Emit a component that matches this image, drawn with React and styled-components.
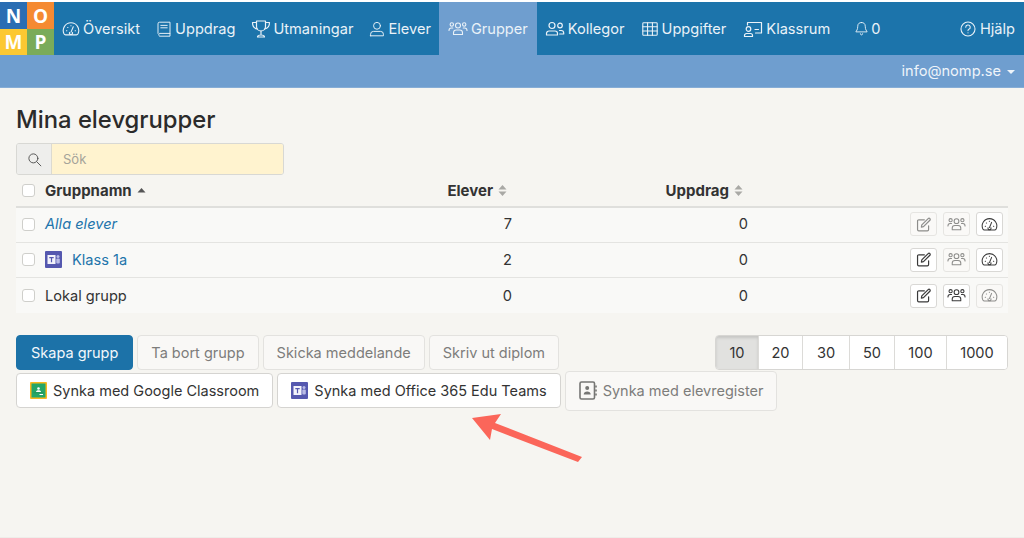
import React from "react";
import styled, { createGlobalStyle } from "styled-components";

const Global = createGlobalStyle`
  html, body { margin: 0; padding: 0; background: #f6f5f1; }
  body { font-family: Inter, "Liberation Sans", sans-serif; color: #333; }
  #root { min-height: 538px; }
  * { box-sizing: border-box; }
`;

const Page = styled.div`
  position: relative;
  width: 1024px;
  height: 538px;
  overflow: hidden;
  padding-top: 2px;
  background: linear-gradient(#fff 0 2px, #f6f5f1 2px);
  border-bottom: 1px solid #eeede9;
`;

const TopBar = styled.nav`
  display: flex;
  height: 53px;
  background: #1c74ab;
`;
const Logo = styled.div`
  display: grid;
  grid-template-columns: 27px 27px;
  grid-template-rows: 27px 26px;
  width: 54px;
  font-family: "Open Sans", sans-serif;
  font-weight: 700;
  font-size: 19px;
  color: #fff;
`;
const LogoCell = styled.span`
  display: flex;
  align-items: center;
  justify-content: center;
  background: ${(p) => p.$bg};
`;
const NavItem = styled.a`
  display: flex;
  align-items: center;
  gap: ${(p) => p.$gap ?? 3}px;
  height: 53px;
  padding: 0 ${(p) => p.$pr || 8}px 0 ${(p) => p.$pl || 8}px;
  font-size: 14.6px;
  color: #eaf2f8;
  background: ${(p) => (p.$active ? "#6f9ecf" : "transparent")};
  white-space: nowrap;
`;
const NavSpacer = styled.div`
  flex: 1;
`;
const SubBar = styled.div`
  display: flex;
  justify-content: flex-end;
  align-items: center;
  height: 33px;
  padding-right: 9px;
  gap: 6px;
  background: #6f9ecf;
  border-bottom: 1px solid #86add6;
  color: #eef4fa;
  font-size: 14.6px;
`;
const Caret = styled.span`
  width: 0;
  height: 0;
  margin-top: 2px;
  border-left: 4px solid transparent;
  border-right: 4px solid transparent;
  border-top: 4px solid #eef4fa;
`;

const Content = styled.main`
  padding: 16px 16px 0;
`;
const Title = styled.h1`
  margin: 0 0 8px;
  height: 31px;
  font-size: 23.8px;
  line-height: 31px;
  font-weight: 500;
  color: #2b2b2b;
`;
const Search = styled.div`
  display: flex;
  width: 268px;
  height: 32px;
  border: 1px solid #d8d8d4;
  border-radius: 3px;
  overflow: hidden;
`;
const SearchAddon = styled.span`
  display: flex;
  align-items: center;
  justify-content: center;
  width: 35px;
  background: #eeeeec;
  border-right: 1px solid #dcdad0;
  color: #555;
`;
const SearchInput = styled.input`
  flex: 1;
  min-width: 0;
  padding: 0 11px;
  border: 0;
  background: #fff3cf;
  font: 13px Inter, sans-serif;
  &::placeholder { color: #a5a39a; opacity: 1; }
`;

const Row = styled.div`
  display: grid;
  grid-template-columns: 29px 395px 72px 236px 1fr;
  align-items: center;
  width: 992px;
  height: ${(p) => p.$h || 35}px;
  padding-bottom: ${(p) => p.$pb || 0}px;
  background: ${(p) => (p.$head ? "transparent" : "#f9f9f7")};
  border-bottom: ${(p) => (p.$head ? "2px solid #dfdfdc" : p.$last ? "0" : "1px solid #e4e4e1")};
  font-size: 14.6px;
`;
const Check = styled.input.attrs({ type: "checkbox" })`
  appearance: none;
  width: 13px;
  height: 13px;
  margin: 0 0 0 6px;
  background: #fff;
  border: 1px solid #cfcfcb;
  border-radius: 3px;
`;
const NameCell = styled.span`
  display: flex;
  align-items: center;
  gap: 10px;
  color: ${(p) => (p.$link ? "#2274ab" : "#333")};
  font-style: ${(p) => (p.$italic ? "italic" : "normal")};
`;
const HeadCell = styled.span`
  display: flex;
  align-items: center;
  justify-content: ${(p) => (p.$left ? "flex-start" : "flex-end")};
  gap: 5px;
  padding-right: ${(p) => (p.$left ? 0 : 5)}px;
  font-weight: 700;
  font-size: 15px;
  color: #333;
`;
const NumCell = styled.span`
  text-align: right;
  color: #333;
`;
const ActionCell = styled.span`
  display: flex;
  justify-content: flex-end;
  gap: 6px;
  padding-right: 5px;
`;
const IconButton = styled.button`
  display: flex;
  align-items: center;
  justify-content: center;
  width: 27px;
  height: 24px;
  padding: 0;
  background: ${(p) => (p.$off ? "#faf9f7" : "#fff")};
  border: 1px solid ${(p) => (p.$off ? "#e6e5e2" : "#d9d8d5")};
  border-radius: 3px;
  color: ${(p) => (p.$off ? "#8d8d8b" : "#3a3a3a")};
`;

const Footer = styled.div`
  display: flex;
  justify-content: space-between;
  align-items: flex-start;
  margin-top: 22px;
`;
const ButtonArea = styled.div`
  display: flex;
  flex-direction: column;
  gap: 3px;
  width: 699px;
`;
const ButtonRow = styled.div`
  display: flex;
  align-items: center;
  gap: 4px;
  width: max-content;
  height: ${(p) => p.$h}px;
`;
const Btn = styled.button`
  display: inline-flex;
  align-items: center;
  flex: none;
  gap: ${(p) => p.$gap || 6}px;
  height: ${(p) => p.$h || 35}px;
  padding: 0 ${(p) => p.$pad || 13}px;
  font: 14.5px Inter, sans-serif;
  white-space: nowrap;
  border-radius: 4px;
  color: ${(p) => (p.$primary ? "#f2f7fb" : p.$off ? "#7d7d7b" : "#333")};
  background: ${(p) => (p.$primary ? "#1c72a8" : p.$off ? "#f9f8f6" : "#fff")};
  border: 1px solid ${(p) => (p.$primary ? "#1c72a8" : p.$off ? "#e3e2df" : "#d5d4d1")};
`;
const PageSizes = styled.div`
  display: flex;
  flex: none;
  height: 35px;
  background: #fff;
  border: 1px solid #d7d6d3;
  border-radius: 4px;
  overflow: hidden;
`;
const SizeBtn = styled.button`
  width: ${(p) => p.$w}px;
  padding: 0;
  border: 0;
  border-left: ${(p) => (p.$first ? "0" : "1px solid #dcdbd8")};
  background: ${(p) => (p.$active ? "#e1e1df" : "#fff")};
  box-shadow: ${(p) => (p.$active ? "inset 0 2px 3px rgba(0,0,0,.12)" : "none")};
  font: 14.6px Inter, sans-serif;
  color: #333;
`;
const ArrowOverlay = styled.svg`
  position: absolute;
  left: 465px;
  top: 410px;
`;

const Ico = ({ s = 18, w = 1.2, children, vb = 20 }) => (
  <svg width={s} height={s} viewBox={`0 0 ${vb} ${vb}`} fill="none" stroke="currentColor" strokeWidth={w} strokeLinecap="round" strokeLinejoin="round">
    {children}
  </svg>
);
const GaugeI = (p) => (
  <Ico {...p}>
    <path d="M4 16.500h12c1 0 1.400-.4 1.800-1.200A8.600 8.600 0 1 0 2.200 15.300c.4.8.8 1.200 1.800 1.200Z" />
    <path d="M10 13.500 12.500 7.500M8.300 13.800a1.800 1.800 0 1 0 3.400 0" />
    <path d="M5 12h.4M14.600 12h.4M6.300 8.300h.3M9.800 6.300h.3" />
  </Ico>
);
const BookI = (p) => (
  <Ico {...p}>
    <path d="M2.500 15.500V3.500a2 2 0 0 1 2-2h13v14h-13a2 2 0 0 0 0 3.500h13v-3.500" />
    <path d="M6 5.500h8M6 8.500h8" />
  </Ico>
);
const TrophyI = (p) => (
  <Ico {...p}>
    <path d="M5.500 2h9v5.500a4.500 4.500 0 0 1-9 0V2Z" />
    <path d="M5.500 3.500H1.500c0 4 1.500 6 5 6.500M14.500 3.500h4c0 4-1.500 6-5 6.500M10 12v4M6.500 18c0-1.300 1.500-2 3.500-2s3.500.7 3.500 2h-7Z" />
  </Ico>
);
const UserI = (p) => (
  <Ico {...p}>
    <circle cx="10" cy="6" r="4.300" />
    <path d="M2 18.500v-2A3.500 3.500 0 0 1 5.500 13h9a3.500 3.500 0 0 1 3.500 3.500v2H2Z" />
  </Ico>
);
const GroupI = ({ s = 20, w = 1.1 }) => (
  <Ico s={s} w={w}>
    <circle cx="10" cy="6.500" r="2.500" /><circle cx="3.800" cy="5.500" r="1.700" /><circle cx="16.200" cy="5.500" r="1.700" />
    <path d="M5.500 15.500v-1.700A2.800 2.800 0 0 1 8.300 11h3.400a2.800 2.800 0 0 1 2.800 2.800v1.700h-9ZM1 11.500c0-1.500 1-2.500 2.300-2.500h1.500M19 11.500c0-1.500-1-2.500-2.300-2.500h-1.500" />
  </Ico>
);
const FriendsI = (p) => (
  <Ico s={20} {...p}>
    <circle cx="7" cy="6.500" r="3" /><circle cx="15" cy="6.500" r="2.300" />
    <path d="M1.500 16v-1.500A2.500 2.500 0 0 1 4 12h6a2.500 2.500 0 0 1 2.500 2.500V16h-11ZM14.500 11.500h1.700a2.500 2.500 0 0 1 2.500 2.500v1h-4" />
  </Ico>
);
const TableI = (p) => (
  <Ico {...p}>
    <rect x="2" y="3" width="16" height="14" rx="1" />
    <path d="M2 7.500h16M2 12.200h16M7.300 3v14M12.700 3v14" />
  </Ico>
);
const ClassI = (p) => (
  <Ico s={20} {...p}>
    <circle cx="5.500" cy="10" r="2.300" />
    <path d="M1.500 17.500v-1a2 2 0 0 1 2-2h4a2 2 0 0 1 2 2v1h-8ZM4.500 6V3.500h14v10.500h-6M12 10.500h3.500" />
  </Ico>
);
const BellI = (p) => (
  <Ico {...p}>
    <path d="M10 2a5 5 0 0 0-5 5c0 5-2 6-2.500 7.500h15C17 13 15 12 15 7a5 5 0 0 0-5-5ZM8.500 17a1.500 1.500 0 0 0 3 0" />
  </Ico>
);
const HelpI = (p) => (
  <Ico {...p}>
    <circle cx="10" cy="10" r="7.800" />
    <path d="M7.500 8a2.500 2.500 0 1 1 3.500 2.300c-.7.3-1 .7-1 1.500M10 14.300h.01" />
  </Ico>
);
const SearchI = () => (
  <Ico s={15} w={1.3}>
    <circle cx="8.500" cy="8.500" r="6" /><path d="m13 13 5.500 5.500" />
  </Ico>
);
const EditI = ({ s = 17 }) => (
  <Ico s={s} w={1.4}>
    <path d="M16 11.500V16a1.500 1.500 0 0 1-1.500 1.500h-10A1.500 1.500 0 0 1 3 16V6a1.500 1.500 0 0 1 1.500-1.500h6.500" />
    <path d="m8 10.500 7.500-7.500a1.400 1.400 0 0 1 2 2L10 12.500l-2.500.5.500-2.500Z" />
  </Ico>
);
const TeamsI = () => (
  <svg width="17" height="17" viewBox="0 0 17 17">
    <rect width="17" height="17" rx="1" fill="#5558af" />
    <rect x="2.500" y="4" width="8" height="9" fill="#f3f3fb" />
    <path d="M4.300 6h4.400v1.200H7.100v4H5.900v-4H4.300Z" fill="#5558af" />
    <circle cx="13" cy="5.500" r="1.500" fill="#b9bbe6" />
    <rect x="11.300" y="7.500" width="3.500" height="5" rx="1" fill="#b9bbe6" />
  </svg>
);
const ClassroomI = () => (
  <svg width="17" height="17" viewBox="0 0 17 17">
    <rect width="17" height="17" rx="1" fill="#f9b81d" />
    <rect x="1.500" y="1.500" width="14" height="14" fill="#25a667" />
    <circle cx="8.500" cy="6.500" r="1.300" fill="#fff" />
    <path d="M6 10c0-1.200 1-1.800 2.500-1.800S11 8.800 11 10H6Z" fill="#fff" />
    <rect x="9.500" y="12" width="3.500" height="1" fill="#fff" />
    <rect x="3.500" y="10.500" width="10" height=".6" fill="#1c8a54" />
  </svg>
);
const AddressI = () => (
  <svg width="18" height="19" viewBox="0 0 18 19" fill="none" stroke="#767674" strokeWidth="1.600">
    <rect x="1" y="1" width="14.500" height="17" rx="1.500" />
    <circle cx="8.200" cy="7" r="2" fill="#767674" stroke="none" />
    <path d="M4.700 13.500c0-2 1.500-3 3.500-3s3.500 1 3.500 3H4.700Z" fill="#767674" stroke="none" />
    <path d="M17 4.500v2M17 8.500v2M17 12.500v2" />
  </svg>
);
const SortBoth = () => (
  <svg width="9" height="11" viewBox="0 0 9 11" fill="#a9a9a5"><path d="M4.500 0 8.500 4.500h-8ZM4.500 11 .5 6.500h8Z" /></svg>
);
const SortUp = () => (
  <svg width="9" height="5" viewBox="0 0 9 5" fill="#555"><path d="M4.500 0 8.500 4.500h-8Z" /></svg>
);

const logo = [["N", "#2a6db3"], ["O", "#f58a32"], ["M", "#fcc832"], ["P", "#7aab5a"]];
const sizes = [["10", 42], ["20", 44], ["30", 47], ["50", 45], ["100", 52], ["1000", 61]];
const groups = [
  { name: "Alla elever", link: true, italic: true, el: 7, edit: true, group: true, gauge: false, pb: 2 },
  { name: "Klass 1a", link: true, teams: true, el: 2, edit: false, group: true, gauge: false, pb: 1 },
  { name: "Lokal grupp", el: 0, edit: false, group: false, gauge: true, last: true, pb: 0 },
];

export default function App() {
  return (
    <Page>
      <Global />
      <TopBar>
        <Logo>{logo.map(([l, c]) => <LogoCell key={l} $bg={c}>{l}</LogoCell>)}</Logo>
        <NavItem><GaugeI />Översikt</NavItem>
        <NavItem><BookI s={16} />Uppdrag</NavItem>
        <NavItem $gap={2}><TrophyI s={20} />Utmaningar</NavItem>
        <NavItem><UserI s={16} />Elever</NavItem>
        <NavItem $active $pl={9} $pr={9}><GroupI />Grupper</NavItem>
        <NavItem><FriendsI />Kollegor</NavItem>
        <NavItem><TableI />Uppgifter</NavItem>
        <NavItem $pl={9}><ClassI />Klassrum</NavItem>
        <NavItem $pl={16} $gap={2}><BellI s={15} />0</NavItem>
        <NavSpacer />
        <NavItem $pr={9}><HelpI />Hjälp</NavItem>
      </TopBar>
      <SubBar>info@nomp.se<Caret /></SubBar>
      <Content>
        <Title>Mina elevgrupper</Title>
        <Search>
          <SearchAddon><SearchI /></SearchAddon>
          <SearchInput placeholder="Sök" />
        </Search>
        <Row $head $h={33}>
          <Check />
          <HeadCell $left>Gruppnamn <SortUp /></HeadCell>
          <HeadCell>Elever <SortBoth /></HeadCell>
          <HeadCell>Uppdrag <SortBoth /></HeadCell>
          <span />
        </Row>
        {groups.map((g) => (
          <Row key={g.name} $last={g.last} $pb={g.pb}>
            <Check />
            <NameCell $link={g.link} $italic={g.italic}>
              {g.teams && <TeamsI />}{g.name}
            </NameCell>
            <NumCell>{g.el}</NumCell>
            <NumCell>0</NumCell>
            <ActionCell>
              <IconButton $off={g.edit}><EditI /></IconButton>
              <IconButton $off={g.group}><GroupI s={19} /></IconButton>
              <IconButton $off={g.gauge}><GaugeI s={17} /></IconButton>
            </ActionCell>
          </Row>
        ))}
        <Footer>
          <ButtonArea>
            <ButtonRow $h={35}>
              <Btn $primary $pad={14}>Skapa grupp</Btn>
              <Btn $off>Ta bort grupp</Btn>
              <Btn $off>Skicka meddelande</Btn>
              <Btn $off>Skriv ut diplom</Btn>
            </ButtonRow>
            <ButtonRow $h={35}>
              <Btn><ClassroomI />Synka med Google Classroom</Btn>
              <Btn><TeamsI />Synka med Office 365 Edu Teams</Btn>
              <Btn $off $h={40} $pad={13}><AddressI />Synka med elevregister</Btn>
            </ButtonRow>
          </ButtonArea>
          <PageSizes>
            {sizes.map(([n, w], i) => (
              <SizeBtn key={n} $w={w} $first={i === 0} $active={i === 0}>{n}</SizeBtn>
            ))}
          </PageSizes>
        </Footer>
      </Content>
      <ArrowOverlay width="125" height="60" viewBox="0 0 125 60">
        <path d="M7 8 36 4 30 13 117 47 113 52 27 19 25 30Z" fill="#fb665a" />
      </ArrowOverlay>
    </Page>
  );
}
